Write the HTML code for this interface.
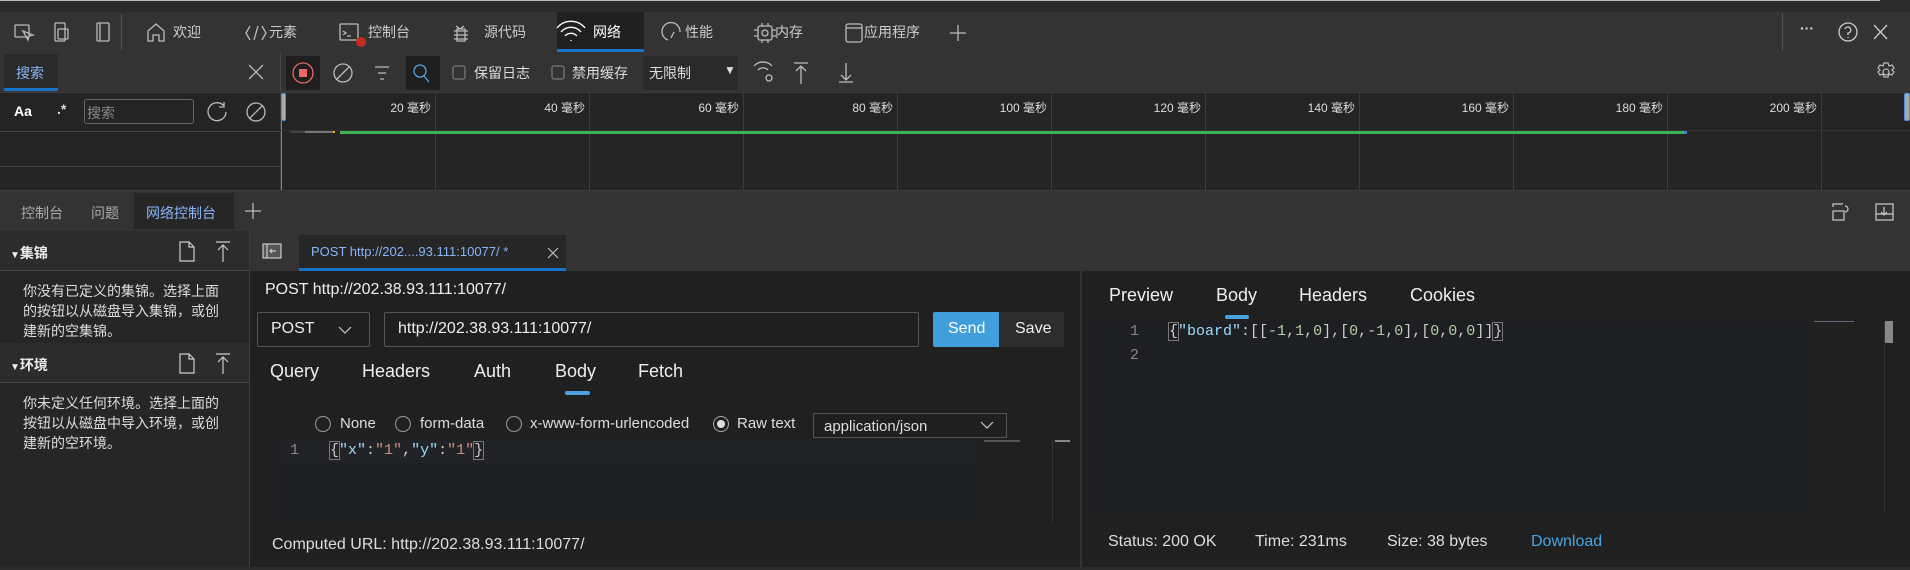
<!DOCTYPE html>
<html><head><meta charset="utf-8"><style>
*{margin:0;padding:0;box-sizing:border-box}
body{width:1910px;height:570px;background:#2b2b2b;position:relative;overflow:hidden;font-family:"Liberation Sans","Noto Sans CJK SC",sans-serif;color:#d4d4d4;font-size:14px}
.a{position:absolute;white-space:nowrap}
.ln{position:absolute;background:#3c3c3c}
svg{position:absolute;overflow:visible}
.mono{font-family:"Liberation Mono","DejaVu Sans Mono",monospace}
</style></head><body>
<div class="a" style="left:0;top:0;width:1880px;height:1px;background:#bbb"></div>
<div class="a" style="left:0;top:12px;width:1910px;height:40px;background:#333"></div>
<div class="a" style="left:557px;top:12px;width:87px;height:40px;background:#202020;border-bottom:3px solid #1a73c8"></div>
<svg style="left:14px;top:22px" width="130" height="22" fill="none" stroke="#bbb" stroke-width="1.3">
<rect x="1" y="3" width="14" height="12" rx="1"/><path d="M9 9l5 9 1-4 4-1z"/>
<rect x="41" y="1" width="10" height="18" rx="1"/><rect x="44" y="7" width="10" height="10" rx="1"/>
<rect x="83" y="1" width="12" height="18" rx="1"/><path d="M86 1v18"/>
</svg>
<div class="a" style="left:121px;top:14px;width:1px;height:36px;background:#555"></div>
<svg style="left:146px;top:22px" width="830" height="22" fill="none" stroke="#bbb" stroke-width="1.3">
<path d="M2 19V9l8-7 8 7v10h-5v-6h-6v6z"/>
<path d="M104 4l-4 7 4 7M112 4l-4 14M116 4l4 7-4 7"/>
<rect x="194" y="2" width="18" height="16" rx="1"/><path d="M197 9l3 2-3 2M201 14h4"/>
<path d="M310 4l4 3 4-3M308 9h14M308 13h14M308 17h14M311 7v12h8V7z"/>
<path d="M425 18v1M419 14a8 8 0 0 1 12 0M415 10a13 13 0 0 1 20 0M411 6a18 18 0 0 1 28 0" stroke="#fff"/>
<path d="M522 18a9 9 0 1 1 12-8M528 10l-3 6"/>
<rect x="612" y="4" width="14" height="14" rx="2"/><circle cx="619" cy="11" r="3"/><path d="M608 8h4M608 14h4M626 8h4M626 14h4M616 1v3M622 1v3M616 18v3M622 18v3"/>
<rect x="700" y="2" width="16" height="18" rx="2"/><path d="M700 6h16"/>
<path d="M812 3v16M804 11h16"/>
</svg>
<div class="a" style="left:356px;top:37px;width:10px;height:10px;border-radius:50%;background:#c42b1c"></div>
<div class="a" style="left:173px;top:22px;color:#ccc">欢迎</div>
<div class="a" style="left:269px;top:22px;color:#ccc">元素</div>
<div class="a" style="left:368px;top:22px;color:#ccc">控制台</div>
<div class="a" style="left:484px;top:22px;color:#ccc">源代码</div>
<div class="a" style="left:593px;top:22px;color:#fff">网络</div>
<div class="a" style="left:685px;top:22px;color:#ccc">性能</div>
<div class="a" style="left:775px;top:22px;color:#ccc">内存</div>
<div class="a" style="left:864px;top:22px;color:#ccc">应用程序</div>
<div class="a" style="left:1782px;top:13px;width:1px;height:38px;background:#555"></div>
<div class="a" style="left:1800px;top:20px;color:#ddd;font-weight:bold">···</div>
<svg style="left:1838px;top:22px" width="70" height="22" fill="none" stroke="#ccc" stroke-width="1.3"><circle cx="10" cy="10" r="9"/><path d="M7 7a3 3 0 1 1 3 4v2M10 15v1"/><path d="M36 3l13 14M49 3L36 17"/></svg>
<div class="a" style="left:0;top:52px;width:1910px;height:40px;background:#333"></div>
<div class="a" style="left:4px;top:54px;width:54px;height:37px;background:#2a2a2a;border-bottom:3px solid #1a73c8"></div>
<div class="a" style="left:16px;top:63px;color:#8ab4f8">搜索</div>
<svg style="left:248px;top:64px" width="20" height="18" fill="none" stroke="#bbb" stroke-width="1.3"><path d="M1 1l14 14M15 1L1 15"/></svg>
<div class="a" style="left:280px;top:52px;width:1px;height:40px;background:#444"></div>
<div class="a" style="left:286px;top:56px;width:34px;height:34px;background:#1f1f1f"></div>
<div class="a" style="left:406px;top:56px;width:34px;height:34px;background:#1f1f1f"></div>
<svg style="left:292px;top:62px" width="570" height="24" fill="none" stroke="#bbb" stroke-width="1.3">
<circle cx="11" cy="11" r="10" stroke="#e66"/><rect x="7" y="7" width="8" height="8" fill="#e66" stroke="none"/>
<circle cx="51" cy="11" r="9"/><path d="M45 17l12-12"/>
<path d="M83 5h14M86 11h8M88 17h4"/>
<circle cx="128" cy="9" r="6" stroke="#5ba0e0"/><path d="M132 14l5 6" stroke="#5ba0e0"/>
<rect x="161" y="4" width="12" height="13" rx="2" stroke="#777"/>
<rect x="260" y="4" width="12" height="13" rx="2" stroke="#777"/>
<path d="M466 8a7 7 0 0 1 10 0M462 4a12 12 0 0 1 18 0"/><circle cx="477" cy="16" r="3"/>
<path d="M502 1h14M509 4v18M504 9l5-5 5 5"/>
<path d="M547 20h14M554 1v17M549 13l5 5 5-5"/>
</svg>
<div class="a" style="left:474px;top:63px;color:#ddd">保留日志</div>
<div class="a" style="left:572px;top:63px;color:#ddd">禁用缓存</div>
<div class="a" style="left:643px;top:56px;width:95px;height:34px;background:#2a2a2a"></div>
<div class="a" style="left:649px;top:63px;color:#ddd">无限制</div>
<div class="a" style="left:724px;top:63px;color:#ddd;font-size:12px">▼</div>
<svg style="left:1876px;top:62px" width="22" height="22" fill="none" stroke="#bbb" stroke-width="1.2"><circle cx="10" cy="10" r="3"/><path d="M8 1h4l1 3 3-1 2 3-2 2 2 2-2 3-3-1-1 3H8l-1-3-3 1-2-3 2-2-2-2 2-3 3 1z"/></svg>
<div class="a" style="left:0;top:92px;width:1910px;height:98px;background:#242424"></div>
<div class="a" style="left:0;top:92px;width:1910px;height:1px;background:#3c3c3c"></div>
<div class="a" style="left:280px;top:92px;width:1px;height:98px;background:#3c3c3c"></div>
<div class="a" style="left:0;top:131px;width:280px;height:1px;background:#444"></div>
<div class="a" style="left:0;top:166px;width:280px;height:1px;background:#444"></div>
<div class="a" style="left:14px;top:103px;color:#fff;font-weight:bold;font-size:14px">Aa</div>
<div class="a" style="left:57px;top:101px;color:#ddd;font-weight:bold">.*</div>
<div class="a" style="left:84px;top:99px;width:110px;height:25px;border:1px solid #666;border-radius:3px;color:#888;padding:3px 2px;font-size:14px">搜索</div>
<svg style="left:208px;top:101px" width="60" height="22" fill="none" stroke="#bbb" stroke-width="1.3"><path d="M16 5a9 9 0 1 0 2 6M16 1v5h-5"/><circle cx="48" cy="11" r="9"/><path d="M42 17l12-12"/></svg>
<div class="a" style="left:281px;top:93px;width:5px;height:28px;background:#aaa;border:1px solid #4a90d9;border-radius:2px"></div>
<div class="a" style="left:1904px;top:93px;width:6px;height:28px;background:#aaa;border:1px solid #4a90d9;border-radius:2px"></div>
<div class="a" style="left:281px;top:121px;width:1px;height:69px;background:#4a90d9"></div>
<div class="a" style="left:281px;top:130px;width:1629px;height:1px;background:#333"></div>
<div id="ticks"></div>
<div class="a" style="left:290px;top:131px;width:15px;height:2px;background:#444"></div>
<div class="a" style="left:305px;top:131px;width:28px;height:2px;background:#777"></div>
<div class="a" style="left:333px;top:131px;width:2px;height:2px;background:#e8b000"></div>
<div class="a" style="left:340px;top:131px;width:1345px;height:3px;background:#3cb454"></div>
<div class="a" style="left:1684px;top:131px;width:3px;height:3px;background:#4a7be0"></div>
<div class="a" style="left:0;top:190px;width:1910px;height:41px;background:#333"></div>
<div class="a" style="left:0;top:190px;width:1910px;height:1px;background:#3c3c3c"></div>
<div class="a" style="left:21px;top:203px;color:#aaa">控制台</div>
<div class="a" style="left:91px;top:203px;color:#aaa">问题</div>
<div class="a" style="left:134px;top:193px;width:100px;height:36px;background:#262626"></div>
<div class="a" style="left:146px;top:203px;color:#8ab4f8">网络控制台</div>
<svg style="left:244px;top:202px" width="18" height="18" stroke="#bbb" stroke-width="1.3"><path d="M9 1v16M1 9h16"/></svg>
<svg style="left:1832px;top:203px" width="70" height="20" fill="none" stroke="#ccc" stroke-width="1.2"><rect x="1" y="8" width="11" height="9"/><path d="M1 4V1h10M13 3a3 3 0 0 1 0 6"/><rect x="44" y="1" width="17" height="16"/><path d="M44 11h17M52 4v8M49 9l3 3 3-3"/></svg>
<div class="a" style="left:0;top:231px;width:249px;height:336px;background:#262626"></div>
<div class="a" style="left:249px;top:231px;width:1px;height:336px;background:#3c3c3c"></div>
<div class="a" style="left:0;top:231px;width:249px;height:40px;background:#2c2c2c;border-bottom:1px solid #444"></div>
<div class="a" style="left:10px;top:243px;color:#eee;font-weight:bold"><span style="font-size:10px">▼</span>集锦</div>
<div class="a" style="left:0;top:343px;width:249px;height:40px;background:#2c2c2c;border-bottom:1px solid #444"></div>
<div class="a" style="left:10px;top:355px;color:#eee;font-weight:bold"><span style="font-size:10px">▼</span>环境</div>
<svg style="left:178px;top:241px" width="60" height="140" fill="none" stroke="#ccc" stroke-width="1.2"><path d="M2 1h9l5 5v14H2zM11 1v5h5"/><path d="M38 1h14M45 4v17M40 9l5-5 5 5"/><path d="M2 113h9l5 5v14H2zM11 113v5h5"/><path d="M38 113h14M45 116v17M40 121l5-5 5 5"/></svg>
<div class="a" style="left:23px;top:281px;line-height:20px;font-size:14px;color:#ddd">你没有已定义的集锦。选择上面<br>的按钮以从磁盘导入集锦，或创<br>建新的空集锦。</div>
<div class="a" style="left:23px;top:393px;line-height:20px;font-size:14px;color:#ddd">你未定义任何环境。选择上面的<br>按钮以从磁盘中导入环境，或创<br>建新的空环境。</div>
<div class="a" style="left:250px;top:231px;width:1660px;height:40px;background:#333"></div>
<svg style="left:262px;top:243px" width="20" height="16" fill="none" stroke="#ccc" stroke-width="1.2"><rect x="1" y="1" width="18" height="14" fill="#555"/><path d="M5 1v14" /><path d="M14 8H8M10 6l-2 2 2 2"/></svg>
<div class="a" style="left:299px;top:235px;width:267px;height:36px;background:#262626;border-bottom:3px solid #1a73c8"></div>
<div class="a" style="left:311px;top:244px;color:#8ab4f8;font-size:13px">POST http://202....93.111:10077/ *</div>
<svg style="left:547px;top:247px" width="12" height="12" stroke="#bbb" stroke-width="1.2"><path d="M1 1l10 10M11 1L1 11"/></svg>
<div class="a" style="left:250px;top:271px;width:830px;height:296px;background:#202020"></div>
<div class="a" style="left:1080px;top:271px;width:2px;height:296px;background:#333"></div>
<div class="a" style="left:1082px;top:271px;width:828px;height:296px;background:#202020"></div>
<div class="a" style="left:265px;top:281px;font-size:16px;color:#eee">POST http://202.38.93.111:10077/</div>
<div class="a" style="left:257px;top:312px;width:113px;height:35px;border:1px solid #555;border-radius:2px;background:#1f1f1f"></div>
<div class="a" style="left:271px;top:320px;font-size:16px;color:#eee">POST</div>
<svg style="left:338px;top:326px" width="14" height="8" fill="none" stroke="#ccc" stroke-width="1.2"><path d="M1 1l6 6 6-6"/></svg>
<div class="a" style="left:384px;top:312px;width:535px;height:35px;border:1px solid #555;border-radius:2px;background:#1f1f1f"></div>
<div class="a" style="left:398px;top:320px;font-size:16px;color:#eee">http://202.38.93.111:10077/</div>
<div class="a" style="left:933px;top:312px;width:66px;height:35px;background:#409fdb;border-radius:2px 0 0 2px"></div>
<div class="a" style="left:948px;top:320px;font-size:16px;color:#fff">Send</div>
<div class="a" style="left:999px;top:312px;width:65px;height:35px;background:#2d2d2d"></div>
<div class="a" style="left:1015px;top:320px;font-size:16px;color:#eee">Save</div>
<div class="a" style="left:270px;top:361px;font-size:18px;color:#eee">Query</div>
<div class="a" style="left:362px;top:361px;font-size:18px;color:#eee">Headers</div>
<div class="a" style="left:474px;top:361px;font-size:18px;color:#eee">Auth</div>
<div class="a" style="left:555px;top:361px;font-size:18px;color:#eee">Body</div>
<div class="a" style="left:638px;top:361px;font-size:18px;color:#eee">Fetch</div>
<div class="a" style="left:565px;top:391px;width:25px;height:4px;border-radius:2px;background:#4aa3e0"></div>
<svg style="left:315px;top:415px" width="420" height="18" fill="none" stroke="#888" stroke-width="1.2"><circle cx="8" cy="9" r="7.5"/><circle cx="88" cy="9" r="7.5"/><circle cx="199" cy="9" r="7.5"/><circle cx="406" cy="9" r="7.5" stroke="#aaa" stroke-width="1"/><circle cx="406" cy="9" r="4" fill="#ddd" stroke="none"/></svg>
<div class="a" style="left:340px;top:415px;font-size:15px;color:#ddd">None</div>
<div class="a" style="left:420px;top:415px;font-size:15px;color:#ddd">form-data</div>
<div class="a" style="left:530px;top:415px;font-size:15px;color:#ddd">x-www-form-urlencoded</div>
<div class="a" style="left:737px;top:415px;font-size:15px;color:#ddd">Raw text</div>
<div class="a" style="left:813px;top:413px;width:194px;height:25px;border:1px solid #555;background:#1f1f1f"></div>
<div class="a" style="left:824px;top:418px;font-size:15px;color:#ddd">application/json</div>
<svg style="left:980px;top:421px" width="14" height="8" fill="none" stroke="#ccc" stroke-width="1.2"><path d="M1 1l6 6 6-6"/></svg>
<div class="a" style="left:280px;top:440px;width:695px;height:82px;background:#1e1f22"></div>
<div class="a" style="left:280px;top:440px;width:695px;height:23px;background:#222326"></div>
<div class="a" style="left:984px;top:440px;width:36px;height:2px;background:#555"></div>
<div class="a" style="left:1052px;top:440px;width:1px;height:82px;background:#333"></div>
<div class="a" style="left:1055px;top:440px;width:15px;height:2px;background:#888"></div>
<div class="a mono" style="left:290px;top:442px;font-size:15px;color:#888">1</div>
<div class="a mono" style="left:330px;top:442px;font-size:15px;color:#ccc"><span style="outline:1px solid #777">{</span><span style="color:#9cdcfe">"x"</span>:<span style="color:#ce9178">"1"</span>,<span style="color:#9cdcfe">"y"</span>:<span style="color:#ce9178">"1"</span><span style="outline:1px solid #777">}</span></div>
<div class="a" style="left:272px;top:536px;font-size:16px;color:#ddd">Computed URL: http://202.38.93.111:10077/</div>
<div class="a" style="left:1109px;top:285px;font-size:18px;color:#eee">Preview</div>
<div class="a" style="left:1216px;top:285px;font-size:18px;color:#eee">Body</div>
<div class="a" style="left:1299px;top:285px;font-size:18px;color:#eee">Headers</div>
<div class="a" style="left:1410px;top:285px;font-size:18px;color:#eee">Cookies</div>
<div class="a" style="left:1225px;top:315px;width:24px;height:4px;border-radius:2px;background:#4aa3e0"></div>
<div class="a" style="left:1090px;top:321px;width:718px;height:192px;background:#1e1f22"></div>
<div class="a" style="left:1814px;top:321px;width:40px;height:1px;background:#667"></div>
<div class="a" style="left:1884px;top:321px;width:1px;height:192px;background:#333"></div>
<div class="a" style="left:1885px;top:321px;width:8px;height:22px;background:#888"></div>
<div class="a mono" style="left:1130px;top:323px;font-size:15px;color:#888">1</div>
<div class="a mono" style="left:1130px;top:347px;font-size:15px;color:#888">2</div>
<div class="a mono" style="left:1169px;top:323px;font-size:15px;color:#ccc"><span style="outline:1px solid #777">{</span><span style="color:#9cdcfe">"board"</span>:[[-<span style="color:#b5cea8">1</span>,<span style="color:#b5cea8">1</span>,<span style="color:#b5cea8">0</span>],[<span style="color:#b5cea8">0</span>,-<span style="color:#b5cea8">1</span>,<span style="color:#b5cea8">0</span>],[<span style="color:#b5cea8">0</span>,<span style="color:#b5cea8">0</span>,<span style="color:#b5cea8">0</span>]]<span style="outline:1px solid #777">}</span></div>
<div class="a" style="left:1108px;top:533px;font-size:16px;color:#ddd">Status: 200 OK</div>
<div class="a" style="left:1255px;top:533px;font-size:16px;color:#ddd">Time: 231ms</div>
<div class="a" style="left:1387px;top:533px;font-size:16px;color:#ddd">Size: 38 bytes</div>
<div class="a" style="left:1531px;top:533px;font-size:16px;color:#4aa3e0">Download</div>
<div class="a" style="left:0;top:567px;width:1910px;height:3px;background:#2b2b2b"></div>
<script>
var h='';var labels=[20,40,60,80,100,120,140,160,180,200];
for(var i=0;i<10;i++){var x=435+154*i;
h+='<div class="ln" style="left:'+x+'px;top:93px;width:1px;height:97px"></div>';
h+='<div class="a" style="left:'+(x-80)+'px;top:99px;width:76px;text-align:right;font-size:12px;color:#ddd">'+labels[i]+' 毫秒</div>';}
document.getElementById('ticks').innerHTML=h;
</script>
</body></html>
